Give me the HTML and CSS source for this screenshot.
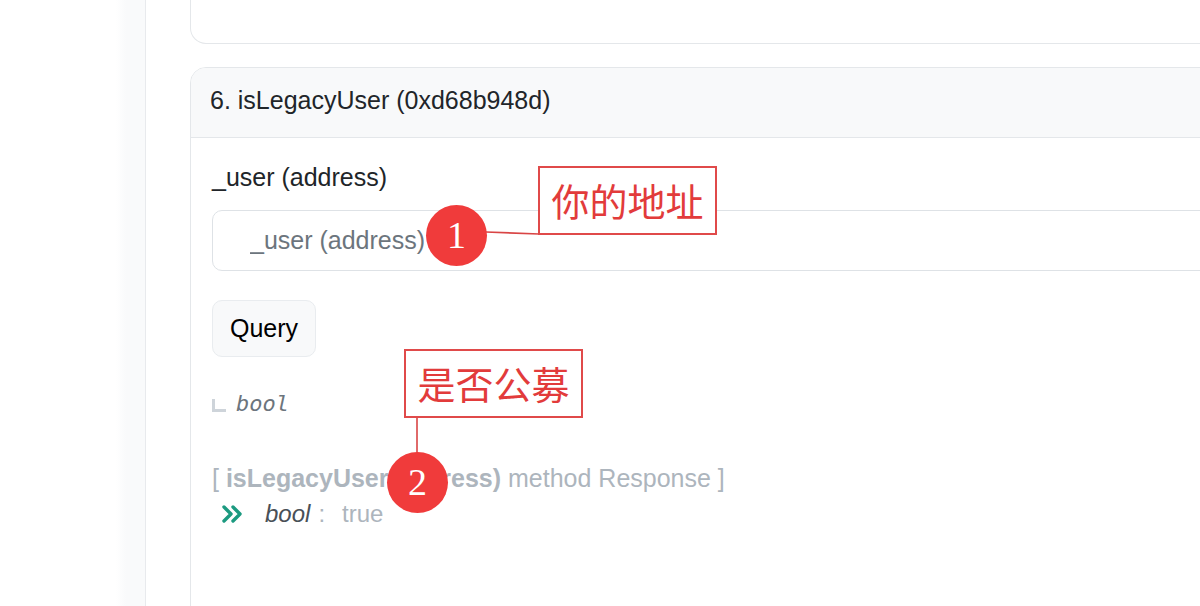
FILE: index.html
```html
<!DOCTYPE html>
<html lang="en">
<head>
    <meta charset="UTF-8">
    <meta name="viewport" content="width=device-width, initial-scale=1.0">
    <title>isLegacyUser</title>
    <link rel="stylesheet" href="styles.css">
</head>
<body>
    <div class="page">
        <aside class="rail"></aside>

        <main class="content">
            <section class="card card-prev"></section>

            <section class="card">
                <header class="card-head">6. isLegacyUser (0xd68b948d)</header>
                <div class="card-body">
                    <label class="field-label" for="user">_user (address)</label>
                    <input id="user" class="field" type="text" placeholder="_user (address)">
                    <button class="btn-query">Query</button>

                    <div class="returns">
                        <span class="corner"></span>
                        <span class="returns-type">bool</span>
                    </div>

                    <div class="response-title">[ <b>isLegacyUser(address)</b> method Response ]</div>
                    <div class="response-row">
                        <svg class="chevrons" width="22" height="18" viewBox="0 0 22 18">
                            <path d="M2 2 L9 9 L2 16 M11 2 L18 9 L11 16" fill="none" stroke="#1c9a80" stroke-width="3.4" stroke-linecap="round" stroke-linejoin="round"/>
                        </svg>
                        <i class="res-type">bool</i>
                        <span class="res-colon">:</span>
                        <span class="res-value">true</span>
                    </div>
                </div>
            </section>
        </main>

        <!-- annotations -->
        <svg class="note-lines" width="1200" height="606">
            <line x1="486" y1="232" x2="539" y2="234" stroke="#d94545" stroke-width="1.6"/>
            <line x1="417" y1="418" x2="417" y2="456" stroke="#d94545" stroke-width="1.6"/>
        </svg>
        <div class="note-box note-box-1">你的地址</div>
        <div class="note-box note-box-2">是否公募</div>
        <div class="note-dot note-dot-1">1</div>
        <div class="note-dot note-dot-2">2</div>
    </div>
</body>
</html>
```

FILE: styles.css
```css
html, body {
    margin: 0;
    overflow: hidden;
}

body {
    font-family: 'Liberation Sans', Arial, sans-serif;
    background: #fff;
    color: #212529;
}

.page {
    position: relative;
    display: flex;
    width: 1200px;
    height: 606px;
    overflow: hidden;
}

.rail {
    flex: none;
    width: 145px;
    height: 606px;
    background: linear-gradient(to right, #fff 0, #fff 116px, #f9fafb 126px, #f9fafb 145px);
    border-right: 1px solid #e8eaed;
}

.content {
    flex: none;
    padding-left: 44px;
}

.card {
    box-sizing: border-box;
    width: 1100px;
    background: #fff;
    border: 1px solid #e4e7ea;
    border-radius: 16px;
    overflow: hidden;
}

.card-prev {
    height: 44px;
    border-top: none;
    border-radius: 0 0 16px 16px;
    margin-bottom: 23px;
}

.card-head {
    height: 36px;
    padding: 14px 0 19px 19px;
    line-height: 36px;
    font-size: 25px;
    background: #f8f9fa;
    border-bottom: 1px solid #e4e7ea;
}

.card-body {
    padding: 21px 0 120px 21px;
}

.field-label {
    display: block;
    font-size: 25px;
    line-height: 36px;
    color: #212529;
}

.field {
    display: block;
    box-sizing: border-box;
    width: 1060px;
    height: 61px;
    margin-top: 15px;
    padding: 0 0 0 37px;
    font-family: 'Liberation Sans', Arial, sans-serif;
    font-size: 25px;
    border: 1px solid #dee2e6;
    border-radius: 10px;
    outline: none;
}

.field::placeholder {
    color: #6c757d;
}

.btn-query {
    display: block;
    box-sizing: border-box;
    width: 104px;
    height: 57px;
    margin-top: 29px;
    font-family: 'Liberation Sans', Arial, sans-serif;
    font-size: 25px;
    color: #000;
    background: #f8f9fa;
    border: 1px solid #e9ecef;
    border-radius: 10px;
}

.returns {
    display: flex;
    align-items: center;
    height: 30px;
    margin-top: 31px;
}

.corner {
    box-sizing: border-box;
    width: 14px;
    height: 13px;
    margin-top: 4px;
    border-left: 3px solid #ced4da;
    border-bottom: 3px solid #ced4da;
}

.returns-type {
    margin-left: 10px;
    font-family: 'DejaVu Sans Mono', monospace;
    font-style: italic;
    font-size: 22px;
    color: #6c757d;
}

.response-title {
    margin-top: 44px;
    font-size: 25px;
    line-height: 32px;
    color: #adb5bd;
}

.response-row {
    display: flex;
    align-items: center;
    height: 32px;
    margin-top: 4px;
    font-size: 24px;
}

.chevrons {
    margin-left: 10px;
}

.res-type {
    margin-left: 21px;
    color: #495057;
}

.res-colon {
    margin-left: 8px;
    color: #adb5bd;
}

.res-value {
    margin-left: 17px;
    color: #adb5bd;
}

/* annotations */
.note-lines {
    position: absolute;
    left: 0;
    top: 0;
    pointer-events: none;
}

.note-box {
    position: absolute;
    box-sizing: border-box;
    width: 179px;
    height: 69px;
    border: 2px solid #e04a4a;
    background: #fff;
    color: #e23b3b;
    font-family: 'Noto Sans CJK SC', sans-serif;
    font-size: 38px;
    line-height: 64px;
    text-align: center;
}

.note-box-1 {
    left: 538px;
    top: 166px;
}

.note-box-2 {
    left: 404px;
    top: 349px;
}

.note-dot {
    position: absolute;
    width: 61px;
    height: 61px;
    border-radius: 50%;
    background: #f03b3b;
    color: #fff;
    font-family: 'Liberation Serif', serif;
    font-size: 38px;
    line-height: 61px;
    text-align: center;
}

.note-dot-1 {
    left: 426px;
    top: 205px;
}

.note-dot-2 {
    left: 387px;
    top: 452px;
}
```
